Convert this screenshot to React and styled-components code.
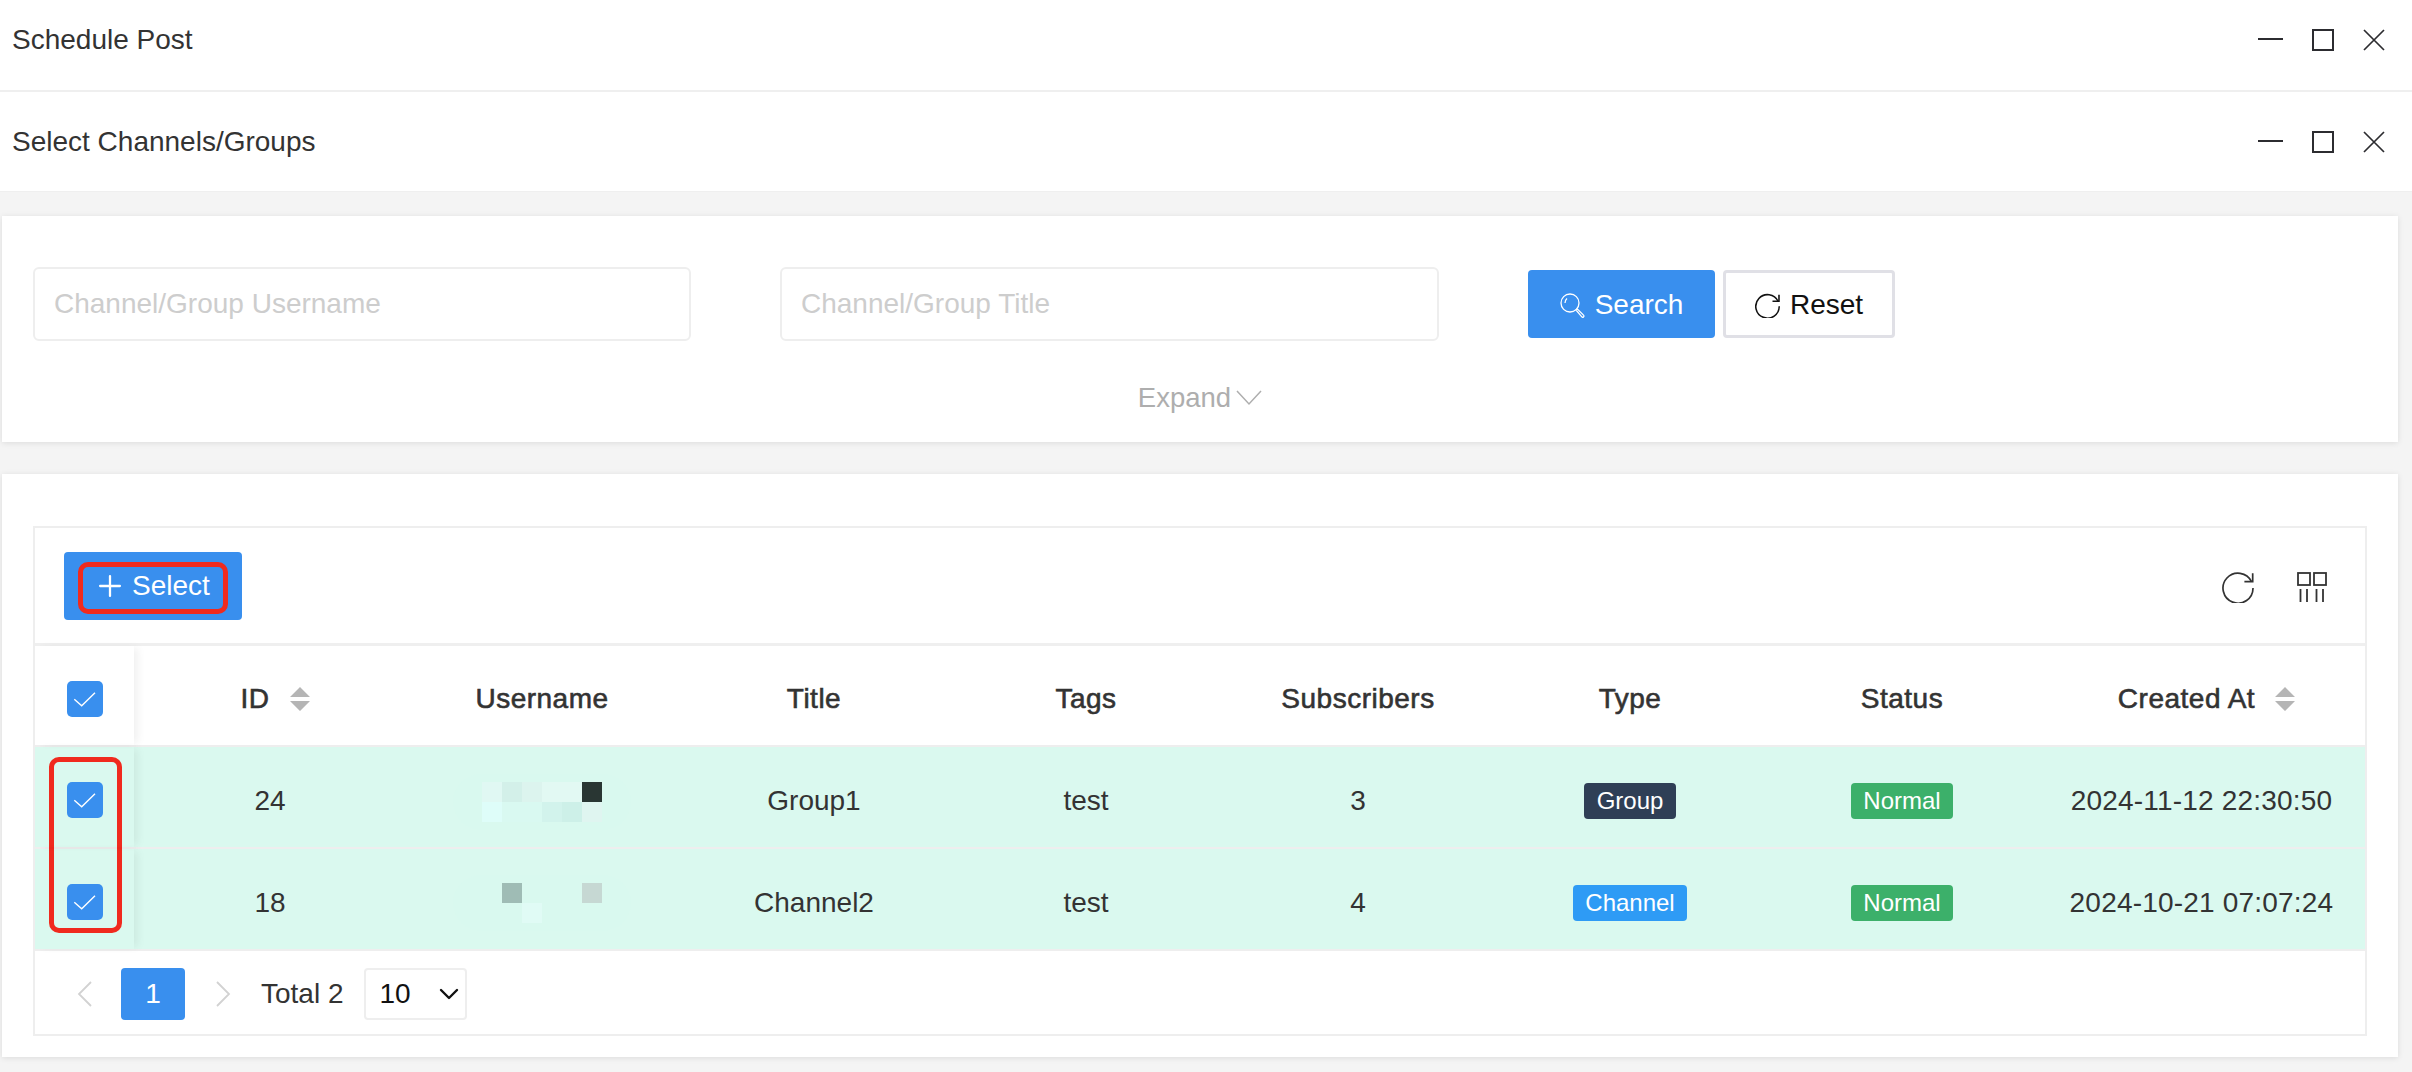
import React from 'react';
import styled, { createGlobalStyle } from 'styled-components';
import { ChevronDown, Plus } from 'lucide-react';

const GlobalStyle = createGlobalStyle`
  * { box-sizing: border-box; }
  html, body { margin: 0; padding: 0; }
  body {
    background: #f4f4f4;
    color: #333;
    font-family: "Liberation Sans", Arial, sans-serif;
    font-size: 28px;
  }
`;

const Page = styled.div`
  width: 2412px;
  height: 1072px;
  overflow: hidden;
  background: #f4f4f4;
`;

const WindowBar = styled.header`
  display: flex;
  align-items: center;
  justify-content: space-between;
  height: ${(p) => p.$height}px;
  padding: 0 27px ${(p) => p.$bottom}px 12px;
  background: #fff;
  border-bottom: ${(p) => p.$line}px solid #efefef;
  font-size: 28px;
  color: #333;
`;

const WindowControls = styled.div`
  display: flex;
  align-items: center;
  gap: 29px;
  color: #2c2c30;
`;

const Card = styled.section`
  margin: ${(p) => p.$top}px 14px 0 2px;
  background: #fff;
  box-shadow: 0 1px 6px rgba(0, 0, 0, 0.1);
`;

const SearchCard = styled(Card)`
  height: 226px;
  padding: 51px 31px 0;
`;

const SearchRow = styled.div`
  display: flex;
  align-items: center;
`;

const TextInput = styled.input`
  width: ${(p) => p.$width}px;
  height: 74px;
  margin-right: ${(p) => p.$gap}px;
  padding: 0 19px;
  border: 2px solid #eeeeee;
  border-radius: 6px;
  background: #fff;
  font: 28px "Liberation Sans", Arial, sans-serif;
  outline: none;

  &::placeholder {
    color: #cdcdcd;
    opacity: 1;
  }
`;

const Button = styled.button`
  display: flex;
  align-items: center;
  justify-content: center;
  gap: ${(p) => p.$gap || 10}px;
  width: ${(p) => p.$width}px;
  height: 68px;
  margin-right: 8px;
  padding: 2px 0 0;
  border: ${(p) => (p.$primary ? '0' : '3px solid #e0e0e6')};
  border-radius: 4px;
  background: ${(p) => (p.$primary ? '#398fee' : '#fff')};
  color: ${(p) => (p.$primary ? '#fff' : '#111')};
  font: 28px "Liberation Sans", Arial, sans-serif;
`;

const ExpandRow = styled.div`
  display: flex;
  align-items: center;
  justify-content: center;
  gap: 5px;
  height: 32px;
  margin-top: 41px;
  color: #aeaeae;
  font-size: 27.5px;
`;

const TableCard = styled(Card)`
  height: 583px;
  padding: 52px 31px 21px;
`;

const TableFrame = styled.div`
  height: 510px;
  border: 2px solid #eeeeee;
`;

const Toolbar = styled.div`
  display: flex;
  align-items: center;
  justify-content: space-between;
  height: 118px;
  padding: 0 38px 0 29px;
  border-bottom: 3px solid #efefef;
`;

const SelectButton = styled(Button)`
  position: relative;
  width: 178px;
  margin: 0;
  padding: 0 3px 0 0;
  gap: 5px;
`;

const ToolIcons = styled.div`
  display: flex;
  align-items: center;
  gap: 43px;
  margin-top: 2px;
  color: #333;
`;

const Row = styled.div`
  display: grid;
  grid-template-columns: 99px repeat(7, 272px) 1fr;
  height: ${(p) => p.$height}px;
  background: ${(p) => (p.$selected ? '#daf9ef' : '#fff')};
  border-bottom: 2px solid #eeeeee;
`;

const Cell = styled.div`
  display: flex;
  align-items: center;
  justify-content: center;
  padding-top: 8px;
  color: #333;
  font-size: 28px;
`;

const HeadCell = styled(Cell)`
  padding: 6px 0 0 ${(p) => (p.$sorted ? 10 : 0)}px;
  letter-spacing: 0.5px;
  -webkit-text-stroke: 0.6px #333;
`;

const CheckCell = styled(Cell)`
  position: relative;
  z-index: 1;
  padding-top: 6px;
  box-shadow: 6px 0 8px -2px rgba(0, 0, 0, 0.06);
`;

const DateCell = styled(Cell)`
  letter-spacing: 0.2px;
`;

const Checkbox = styled.span`
  display: block;
  width: 36px;
  height: 36px;
  border-radius: 5px;
  background: #398fee;
`;

const SortIcon = styled.svg`
  margin-left: 20px;
  flex: none;
`;

const Tag = styled.span`
  display: inline-flex;
  align-items: center;
  height: 36px;
  padding: 0 12.5px;
  border-radius: 4px;
  background: ${(p) => p.$color};
  color: #fff;
  font-size: 24px;
`;

const MosaicArea = styled.div`
  display: grid;
  grid-template-columns: repeat(6, 20px);
  grid-auto-rows: 20px;
  margin-top: ${(p) => p.$shift}px;
  padding: 8px 29px;
  border-radius: 28px;
  background: #d9f9ef;
`;

const MosaicCell = styled.i`
  display: block;
  background: ${(p) => p.$color || 'transparent'};
`;

const Pagination = styled.div`
  display: flex;
  align-items: center;
  height: 83px;
  padding: 3px 0 0 42px;
  font-size: 28px;
  color: #333;
`;

const PageArrow = styled.svg`
  flex: none;
  color: #d2d2d2;
`;

const PageNumber = styled.span`
  display: flex;
  align-items: center;
  justify-content: center;
  width: 64px;
  height: 52px;
  margin: 0 31px 0 29px;
  border-radius: 4px;
  background: #398fee;
  color: #fff;
`;

const Total = styled.span`
  margin: 0 20px 0 30px;
`;

const PageSize = styled.div`
  display: flex;
  align-items: center;
  justify-content: space-between;
  width: 103px;
  height: 52px;
  padding-left: 14px;
  border: 2px solid #eeeeee;
  border-radius: 4px;
  color: #111;
`;

const RedBox = styled.div`
  position: absolute;
  border: 5px solid #f02a1e;
  border-radius: 10px;
  pointer-events: none;
`;

const SelectMark = styled(RedBox)`
  left: 14px;
  top: 10px;
  width: 150px;
  height: 52px;
`;

const RowsMark = styled(RedBox)`
  left: 49px;
  top: 757px;
  width: 73px;
  height: 176px;
`;

const Minimize = () => (
  <svg width="25" height="22" viewBox="0 0 25 22" fill="none" stroke="currentColor" strokeWidth="2">
    <path d="M0 10h25" />
  </svg>
);

const Maximize = () => (
  <svg width="22" height="22" viewBox="0 0 22 22" fill="none" stroke="currentColor" strokeWidth="2">
    <rect x="1" y="1" width="20" height="20" />
  </svg>
);

const Close = () => (
  <svg width="22" height="22" viewBox="0 0 22 22" fill="none" stroke="currentColor" strokeWidth="1.7">
    <path d="M1 1l20 20M21 1L1 21" />
  </svg>
);

const SearchGlyph = () => (
  <svg width="25" height="25" viewBox="0 0 25 25" fill="none" stroke="#fff" strokeWidth="1.3">
    <circle cx="10" cy="10" r="9" />
    <path d="M5 10c0-2 .8-3.6 2-4.6" />
    <path d="M16 17l1.2-1.2 6.3 6.3c.6.6.6 1.3 0 1.8s-1.2.5-1.7 0z" />
  </svg>
);

const RefreshGlyph = ({ size, width = 1.7 }) => (
  <svg width={size} height={size} viewBox="0 0 32 32" fill="none" stroke="currentColor" strokeWidth={width}>
    <path d="M31 17A15 15 0 1 1 29.5 10.6" />
    <path d="M30.7 2.3v8.3h-8.3" />
  </svg>
);

const ColumnsGlyph = () => (
  <svg width="30" height="30" viewBox="0 0 30 30" fill="none" stroke="currentColor" strokeWidth="1.8">
    <rect x="1" y="1" width="12" height="12" />
    <rect x="17" y="1" width="12" height="12" />
    <path d="M3.5 17v13M10 17v13M19.5 17v13M26 17v13" />
  </svg>
);

const CheckMark = () => (
  <Checkbox>
    <svg width="36" height="36" viewBox="0 0 36 36" fill="none" stroke="#fff" strokeWidth="1.4">
      <path d="M7.3 18.3l7.4 6.4L28 11.7" />
    </svg>
  </Checkbox>
);

const Sort = () => (
  <SortIcon width="20" height="24" viewBox="0 0 20 24" fill="#b5b5b5" stroke="none">
    <path d="M10 0l10 10H0zM10 24L0 14h20z" />
  </SortIcon>
);

const Arrow = ({ d }) => (
  <PageArrow width="15" height="26" viewBox="0 0 15 26" fill="none" stroke="currentColor" strokeWidth="1.8">
    <path d={d} />
  </PageArrow>
);

const mosaics = [
  ['#e0f8f3', '#d3f0e9', '#dcf4ee', '#e2f9f3', '#e2f9f3', '#293633', '#defdf9', '#d9f9f1', '#d9f9f1', '#d2f3ec', '#cdf0e8', '#dff5f0'],
  ['', '#9fbcb5', '', '', '', '#c6d8d3', '', '', '#e0fbf5', '', '', ''],
];

const Mosaic = ({ cells, shift }) => (
  <MosaicArea $shift={shift}>
    {cells.map((color, i) => (
      <MosaicCell key={i} $color={color} />
    ))}
  </MosaicArea>
);

const rows = [
  { id: 24, title: 'Group1', subs: 3, type: 'Group', typeColor: '#2f3f56', date: '2024-11-12 22:30:50', mosaic: mosaics[0], shift: 2 },
  { id: 18, title: 'Channel2', subs: 4, type: 'Channel', typeColor: '#2e9bf5', date: '2024-10-21 07:07:24', mosaic: mosaics[1], shift: 0 },
];

const App = () => (
  <Page>
    <GlobalStyle />
    <WindowBar $height={92} $bottom={10} $line={2}>
      <span>Schedule Post</span>
      <WindowControls>
        <Minimize />
        <Maximize />
        <Close />
      </WindowControls>
    </WindowBar>
    <WindowBar $height={100} $bottom={0} $line={1}>
      <span>Select Channels/Groups</span>
      <WindowControls>
        <Minimize />
        <Maximize />
        <Close />
      </WindowControls>
    </WindowBar>

    <SearchCard $top={24}>
      <SearchRow>
        <TextInput $width={658} $gap={89} placeholder="Channel/Group Username" />
        <TextInput $width={659} $gap={89} placeholder="Channel/Group Title" />
        <Button $primary $width={187}>
          <SearchGlyph />
          Search
        </Button>
        <Button $width={172}>
          <RefreshGlyph size={25} width={2} />
          Reset
        </Button>
      </SearchRow>
      <ExpandRow>
        Expand
        <svg width="26" height="16" viewBox="0 0 26 16" fill="none" stroke="#aeaeae" strokeWidth="1.5">
          <path d="M1 1l12 13L25 1" />
        </svg>
      </ExpandRow>
    </SearchCard>

    <TableCard $top={32}>
      <TableFrame>
        <Toolbar>
          <SelectButton $primary>
            <Plus size={34} strokeWidth={1.6} />
            Select
            <SelectMark />
          </SelectButton>
          <ToolIcons>
            <RefreshGlyph size={32} />
            <ColumnsGlyph />
          </ToolIcons>
        </Toolbar>
        <Row $height={101}>
          <CheckCell>
            <CheckMark />
          </CheckCell>
          <HeadCell $sorted>
            ID
            <Sort />
          </HeadCell>
          <HeadCell>Username</HeadCell>
          <HeadCell>Title</HeadCell>
          <HeadCell>Tags</HeadCell>
          <HeadCell>Subscribers</HeadCell>
          <HeadCell>Type</HeadCell>
          <HeadCell>Status</HeadCell>
          <HeadCell $sorted>
            Created At
            <Sort />
          </HeadCell>
        </Row>
        {rows.map((row) => (
          <Row key={row.id} $height={102} $selected>
            <CheckCell>
              <CheckMark />
            </CheckCell>
            <Cell>{row.id}</Cell>
            <Cell>
              <Mosaic cells={row.mosaic} shift={row.shift} />
            </Cell>
            <Cell>{row.title}</Cell>
            <Cell>test</Cell>
            <Cell>{row.subs}</Cell>
            <Cell>
              <Tag $color={row.typeColor}>{row.type}</Tag>
            </Cell>
            <Cell>
              <Tag $color="#3cb06a">Normal</Tag>
            </Cell>
            <DateCell>{row.date}</DateCell>
          </Row>
        ))}
        <Pagination>
          <Arrow d="M14 1L2 13l12 12" />
          <PageNumber>1</PageNumber>
          <Arrow d="M1 1l12 12L1 25" />
          <Total>Total 2</Total>
          <PageSize>
            10
            <ChevronDown size={32} strokeWidth={1.8} />
          </PageSize>
        </Pagination>
      </TableFrame>
    </TableCard>
    <RowsMark />
  </Page>
);

export default App;
